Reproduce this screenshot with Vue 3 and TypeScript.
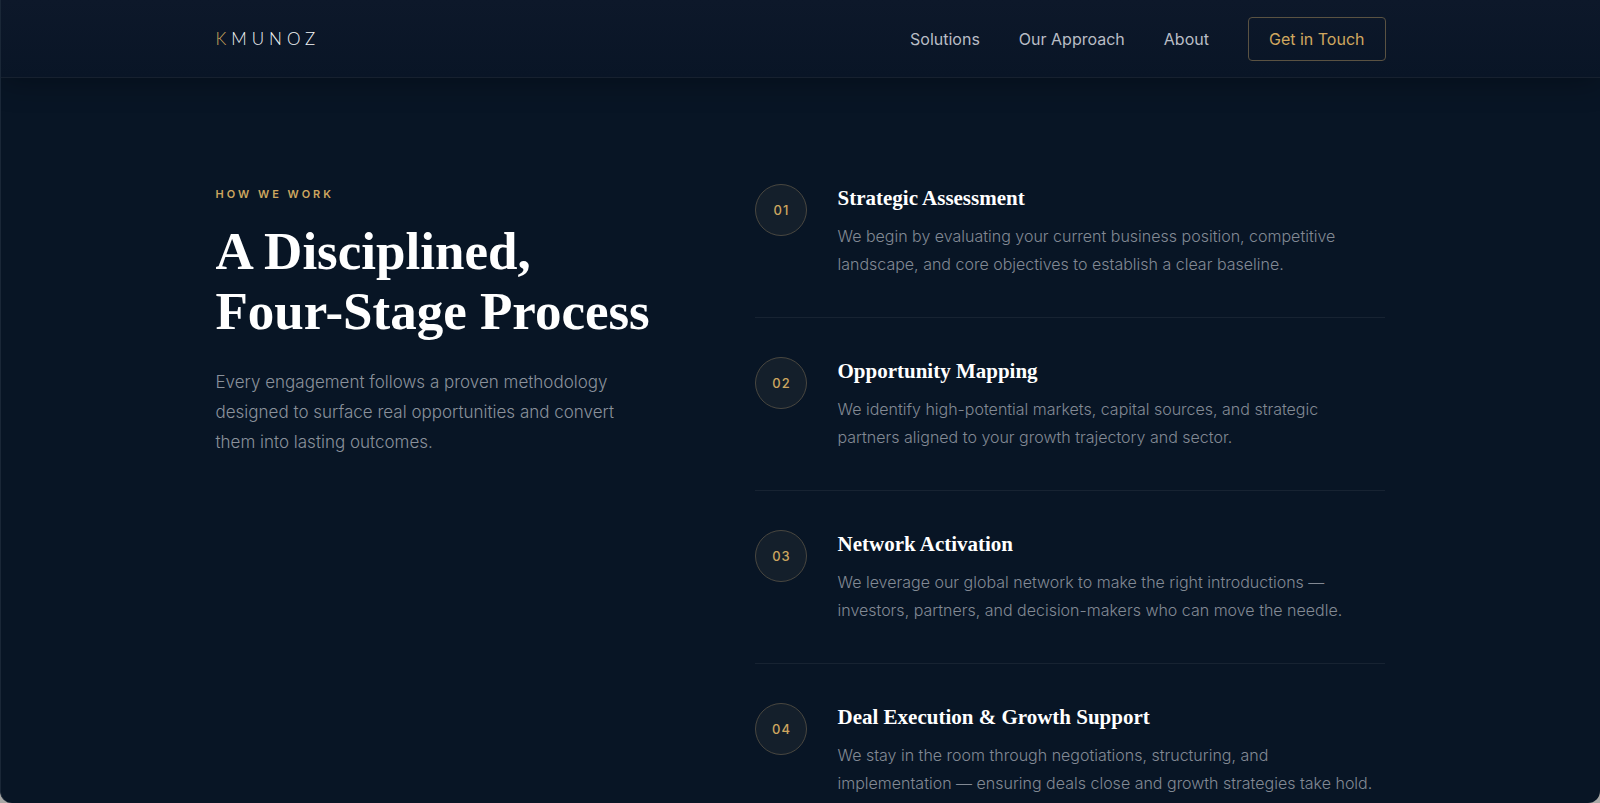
<script setup lang="ts">
interface NavLink {
  label: string
  href: string
}

interface Step {
  number: string
  title: string
  lines: [string, string]
}

const links: NavLink[] = [
  { label: 'Solutions', href: '#solutions' },
  { label: 'Our Approach', href: '#approach' },
  { label: 'About', href: '#about' },
]

const steps: Step[] = [
  {
    number: '01',
    title: 'Strategic Assessment',
    lines: [
      'We begin by evaluating your current business position, competitive',
      'landscape, and core objectives to establish a clear baseline.',
    ],
  },
  {
    number: '02',
    title: 'Opportunity Mapping',
    lines: [
      'We identify high-potential markets, capital sources, and strategic',
      'partners aligned to your growth trajectory and sector.',
    ],
  },
  {
    number: '03',
    title: 'Network Activation',
    lines: [
      'We leverage our global network to make the right introductions —',
      'investors, partners, and decision-makers who can move the needle.',
    ],
  },
  {
    number: '04',
    title: 'Deal Execution & Growth Support',
    lines: [
      'We stay in the room through negotiations, structuring, and',
      'implementation — ensuring deals close and growth strategies take hold.',
    ],
  },
]
</script>

<template>
  <div class="window">
    <header class="header">
      <div class="container bar">
        <a class="logo" href="#top"><span class="logo-accent">K</span>MUNOZ</a>
        <nav class="nav" aria-label="Main">
          <a v-for="link in links" :key="link.href" class="nav-link" :href="link.href">{{ link.label }}</a>
          <a class="cta" href="#contact">Get in Touch</a>
        </nav>
      </div>
    </header>

    <main class="container process">
      <section class="intro">
        <p class="eyebrow">HOW WE WORK</p>
        <h1 class="heading">A Disciplined,<br />Four-Stage Process</h1>
        <p class="lead">
          Every engagement follows a proven methodology<br />
          designed to surface real opportunities and convert<br />
          them into lasting outcomes.
        </p>
      </section>

      <ol class="steps">
        <li v-for="step in steps" :key="step.number" class="step">
          <span class="badge">{{ step.number }}</span>
          <div class="step-body">
            <h2 class="step-title">{{ step.title }}</h2>
            <p class="step-text">{{ step.lines[0] }}<br />{{ step.lines[1] }}</p>
          </div>
        </li>
      </ol>
    </main>
  </div>
</template>

<style>
html,
body {
  background: #a9a8a6;
}

body {
  margin: 0;
}
</style>

<style scoped>
.window {
  box-sizing: border-box;
  min-height: 100vh;
  overflow: hidden;
  border-left: 1px solid #1a2737;
  border-radius: 0 0 12px 12px;
  background: #081525;
  color: #ffffff;
  font-family: Inter, 'Liberation Sans', sans-serif;
}

.container {
  width: calc(100% - 48px);
  max-width: 1170px;
  margin: 0 auto;
}

.header {
  border-bottom: 1px solid #17212f;
  background: linear-gradient(#0d182a, #091526);
  box-shadow: 0 4px 30px rgba(0, 0, 0, 0.3);
}

.bar {
  display: flex;
  align-items: center;
  justify-content: space-between;
  height: 77px;
}

.logo {
  color: #f4f5f7;
  font-family: Lato, 'Liberation Sans', sans-serif;
  font-size: 17px;
  font-weight: 300;
  letter-spacing: 5px;
  text-decoration: none;
}

.logo-accent {
  color: #c9a35c;
}

.nav {
  display: flex;
  align-items: center;
  gap: 39px;
}

.nav-link {
  color: #b9bdc5;
  font-size: 16px;
  text-decoration: none;
}

.cta {
  padding: 0 20px;
  border: 1px solid #5a5242;
  border-radius: 4px;
  color: #d0a75f;
  font-size: 16px;
  line-height: 42px;
  text-decoration: none;
}

.process {
  display: grid;
  grid-template-columns: 1fr 1.4fr;
  gap: 90px;
  padding-top: 106px;
}

.eyebrow {
  margin: 0;
  color: #cda65f;
  font-size: 11px;
  font-weight: 600;
  letter-spacing: 3px;
  line-height: 20px;
}

.heading {
  margin: 17px 0 0;
  font-family: 'Liberation Serif', serif;
  font-size: 53px;
  font-weight: 700;
  line-height: 60px;
  white-space: nowrap;
}

.lead {
  margin: 26px 0 0;
  color: #8a919b;
  font-size: 17px;
  font-weight: 300;
  line-height: 30px;
  white-space: nowrap;
}

.steps {
  margin: 0;
  padding: 0;
  list-style: none;
}

.step {
  display: flex;
  gap: 30px;
  padding-bottom: 39px;
  border-bottom: 1px solid #172332;
}

.step + .step {
  padding-top: 39px;
}

.step:last-child {
  padding-bottom: 0;
  border-bottom: 0;
}

.badge {
  box-sizing: border-box;
  flex: none;
  width: 52px;
  height: 52px;
  border: 1px solid #494740;
  border-radius: 50%;
  background: #141f2b;
  color: #cda65f;
  font-size: 13px;
  font-weight: 500;
  letter-spacing: 1px;
  line-height: 50px;
  text-align: center;
}

.step-title {
  margin: 0;
  font-family: 'Liberation Serif', serif;
  font-size: 21px;
  font-weight: 700;
  line-height: 28px;
}

.step-text {
  margin: 10px 0 0;
  color: #828994;
  font-size: 16px;
  font-weight: 300;
  line-height: 28px;
  white-space: nowrap;
}
</style>
